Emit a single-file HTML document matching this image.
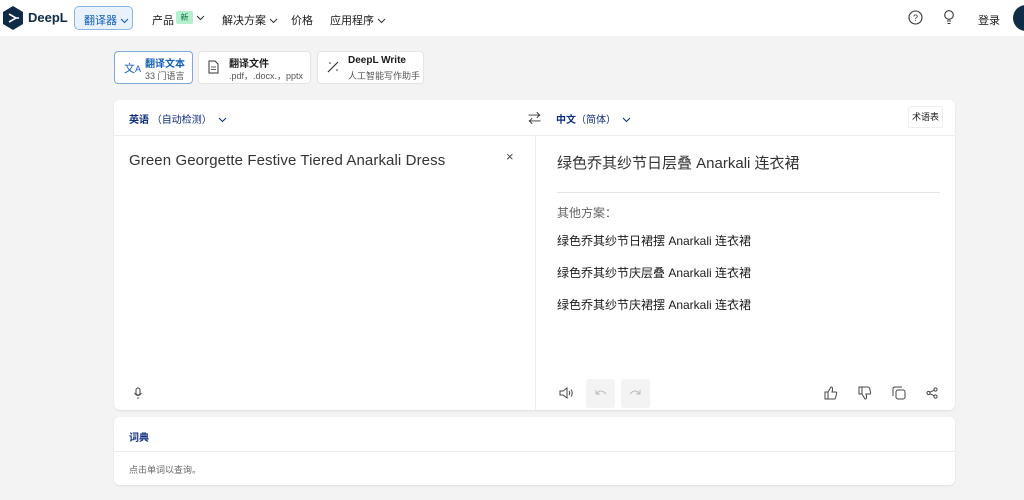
<!DOCTYPE html>
<html><head><meta charset="utf-8"><style>
*{box-sizing:border-box;margin:0;padding:0}
body{width:1024px;height:500px;overflow:hidden;background:#f3f3f3;font-family:"Liberation Sans","Noto Sans CJK SC",sans-serif;color:#1a1a1a;position:relative}
.a{position:absolute}
.hdr{left:0;top:0;width:1024px;height:36px;background:#fff}
.nav{font-size:11px;color:#1a1a1a}
.btn{background:#fff;border-radius:4px;border:1px solid #e5e5e5}
.card{background:#fff;border-radius:6px;box-shadow:0 1px 2px rgba(0,0,0,.08)}
svg{position:absolute}
.cv{position:static;display:inline-block;vertical-align:middle;margin-left:3px}
</style></head><body>
<div class="a hdr"></div>
<svg style="left:3px;top:6px" width="20" height="24" viewBox="0 0 20 24"><path d="M10 0L20 6V18L10 24L0 18V6Z" fill="#0f2b46"/><path d="M6 8L13 12L6 16M13 12H16" stroke="#fff" stroke-width="1.6" fill="none"/></svg>
<div class="a" style="left:28px;top:10px;font-size:13px;font-weight:bold;color:#0f2b46">DeepL</div>
<div class="a" style="left:74px;top:6px;width:59px;height:24px;border:1px solid #8ab4e8;background:#e8f1fc;border-radius:5px;font-size:11px;color:#0f5db8;padding:5px 0 0 9px">翻译器<svg class="cv" width="9" height="6"><path d="M1 1L4.5 4.5L8 1" stroke="#0f5db8" fill="none"/></svg></div>
<div class="a nav" style="left:152px;top:12px">产品</div>
<div class="a" style="left:176px;top:11px;width:17px;height:13px;background:#b3f0d0;font-size:8px;color:#0a6b3a;text-align:center;line-height:13px;border-radius:2px">新</div>
<svg style="left:196px;top:15px" width="9" height="6"><path d="M1 1L4.5 4.5L8 1" stroke="#333" fill="none"/></svg>
<div class="a nav" style="left:222px;top:12px">解决方案<svg class="cv" width="9" height="6"><path d="M1 1L4.5 4.5L8 1" stroke="#333" fill="none"/></svg></div>
<div class="a nav" style="left:291px;top:12px">价格</div>
<div class="a nav" style="left:330px;top:12px">应用程序<svg class="cv" width="9" height="6"><path d="M1 1L4.5 4.5L8 1" stroke="#333" fill="none"/></svg></div>
<svg style="left:908px;top:10px" width="15" height="15"><circle cx="7.5" cy="7.5" r="6.5" fill="none" stroke="#333" stroke-width="1.1"/><text x="5" y="11" font-size="9" fill="#333">?</text></svg>
<svg style="left:943px;top:10px" width="12" height="16"><circle cx="6" cy="5" r="4.3" fill="none" stroke="#333" stroke-width="1.1"/><path d="M4 11H8M4.5 13.5H7.5" stroke="#333"/></svg>
<div class="a nav" style="left:978px;top:12px">登录</div>
<div class="a" style="left:1013px;top:5px;width:26px;height:26px;border-radius:50%;background:#0f2b46"></div>

<div class="a btn" style="left:114px;top:51px;width:79px;height:33px;border-color:#7fa8d8;"></div>
<div class="a" style="left:124px;top:60px;font-size:11px;color:#0f5db8">文<span style="font-size:9px">A</span></div>
<div class="a" style="left:145px;top:55px;font-size:10px;font-weight:bold;color:#0f5db8">翻译文本</div>
<div class="a" style="left:145px;top:69px;font-size:9px;color:#555">33 门语言</div>
<div class="a btn" style="left:198px;top:51px;width:113px;height:33px"></div>
<svg style="left:208px;top:60px" width="11" height="14"><path d="M1 1H7L10 4V13H1Z" fill="none" stroke="#333"/><path d="M3 7H8M3 9.5H8" stroke="#333" stroke-width=".8"/></svg>
<div class="a" style="left:229px;top:55px;font-size:10px;font-weight:bold">翻译文件</div>
<div class="a" style="left:229px;top:69px;font-size:9px;color:#555">.pdf，.docx.，pptx</div>
<div class="a btn" style="left:317px;top:51px;width:107px;height:33px"></div>
<svg style="left:327px;top:61px" width="12" height="12"><path d="M1 11L11 1" stroke="#333" stroke-width="1.2"/><circle cx="3" cy="2" r=".8" fill="#333"/><circle cx="10" cy="9" r=".8" fill="#333"/></svg>
<div class="a" style="left:348px;top:55px;font-size:10px;font-weight:bold">DeepL Write</div>
<div class="a" style="left:348px;top:69px;font-size:9px;color:#555">人工智能写作助手</div>

<div class="a card" style="left:114px;top:100px;width:841px;height:310px"></div>
<div class="a" style="left:114px;top:135px;width:841px;height:1px;background:#ececec"></div>
<div class="a" style="left:535px;top:135px;width:1px;height:275px;background:#ececec"></div>
<div class="a" style="left:129px;top:111px;font-size:10px;color:#0f2b80;font-weight:bold">英语 <span style="font-weight:normal">（自动检测）</span><svg class="cv" style="margin-left:6px" width="9" height="6"><path d="M1 1L4.5 4.5L8 1" stroke="#0f2b80" fill="none"/></svg></div>
<div class="a" style="left:528px;top:108px;font-size:13px;color:#333">⇄</div>
<div class="a" style="left:556px;top:111px;font-size:10px;color:#0f2b80;font-weight:bold">中文<span style="font-weight:normal">（简体）</span><svg class="cv" style="margin-left:6px" width="9" height="6"><path d="M1 1L4.5 4.5L8 1" stroke="#0f2b80" fill="none"/></svg></div>
<div class="a" style="left:908px;top:106px;width:35px;height:22px;border:1px solid #eee;border-radius:3px;font-size:9px;text-align:center;line-height:20px">术语表</div>
<div class="a" style="left:129px;top:152px;font-size:15px;color:#333;letter-spacing:.1px">Green Georgette Festive Tiered Anarkali Dress</div>
<div class="a" style="left:506px;top:149px;font-size:13px;color:#444">×</div>
<div class="a" style="left:557px;top:152px;font-size:15px;color:#333">绿色乔其纱节日层叠 Anarkali 连衣裙</div>
<div class="a" style="left:557px;top:192px;width:383px;height:1px;background:#e5e5e5"></div>
<div class="a" style="left:557px;top:204px;font-size:12px;color:#666">其他方案：</div>
<div class="a" style="left:557px;top:232px;font-size:12px">绿色乔其纱节日裙摆 Anarkali 连衣裙</div>
<div class="a" style="left:557px;top:264px;font-size:12px">绿色乔其纱节庆层叠 Anarkali 连衣裙</div>
<div class="a" style="left:557px;top:296px;font-size:12px">绿色乔其纱节庆裙摆 Anarkali 连衣裙</div>
<svg style="left:133px;top:387px" width="10" height="13"><rect x="3" y="1" width="4" height="7" rx="2" fill="none" stroke="#444"/><path d="M1.5 6Q5 11 8.5 6M5 10V12" stroke="#444" fill="none"/></svg>
<svg style="left:559px;top:386px" width="16" height="14"><path d="M1 5H4L8 2V12L4 9H1Z" fill="none" stroke="#444"/><path d="M10 5Q11.5 7 10 9M12 3.5Q14.5 7 12 10.5" stroke="#444" fill="none"/></svg>
<div class="a" style="left:586px;top:379px;width:29px;height:29px;background:#f3f3f3;border-radius:3px"></div>
<div class="a" style="left:621px;top:379px;width:29px;height:29px;background:#f3f3f3;border-radius:3px"></div>
<svg style="left:594px;top:388px" width="14" height="10"><path d="M2 6Q7 0 12 6M2 6V2M2 6H6" stroke="#bbb" fill="none"/></svg>
<svg style="left:628px;top:388px" width="14" height="10"><path d="M12 6Q7 0 2 6M12 6V2M12 6H8" stroke="#bbb" fill="none"/></svg>
<svg style="left:824px;top:386px" width="14" height="14"><path d="M1 6H4V13H1ZM4 6L7 1Q9 1 8.5 4L8 6H12Q13 6 12.5 8L11.5 12Q11 13 10 13H4" fill="none" stroke="#444"/></svg>
<svg style="left:858px;top:386px" width="14" height="14"><path d="M1 1H4V8H1ZM4 8L7 13Q9 13 8.5 10L8 8H12Q13 8 12.5 6L11.5 2Q11 1 10 1H4" fill="none" stroke="#444"/></svg>
<svg style="left:892px;top:386px" width="14" height="14"><rect x="4" y="4" width="9" height="9" rx="2" fill="none" stroke="#444"/><path d="M10 1H3Q1 1 1 3V10" fill="none" stroke="#444"/></svg>
<svg style="left:926px;top:387px" width="12" height="12"><circle cx="9.5" cy="2.5" r="1.6" fill="none" stroke="#444"/><circle cx="2.5" cy="6" r="1.6" fill="none" stroke="#444"/><circle cx="9.5" cy="9.5" r="1.6" fill="none" stroke="#444"/><path d="M4 5.2L8 3.3M4 6.8L8 8.7" stroke="#444"/></svg>

<div class="a card" style="left:114px;top:417px;width:841px;height:68px"></div>
<div class="a" style="left:114px;top:451px;width:841px;height:1px;background:#ececec"></div>
<div class="a" style="left:129px;top:429px;font-size:10px;font-weight:bold;color:#0f2b80">词典</div>
<div class="a" style="left:129px;top:463px;font-size:9px;color:#666">点击单词以查询。</div>
</body></html>
